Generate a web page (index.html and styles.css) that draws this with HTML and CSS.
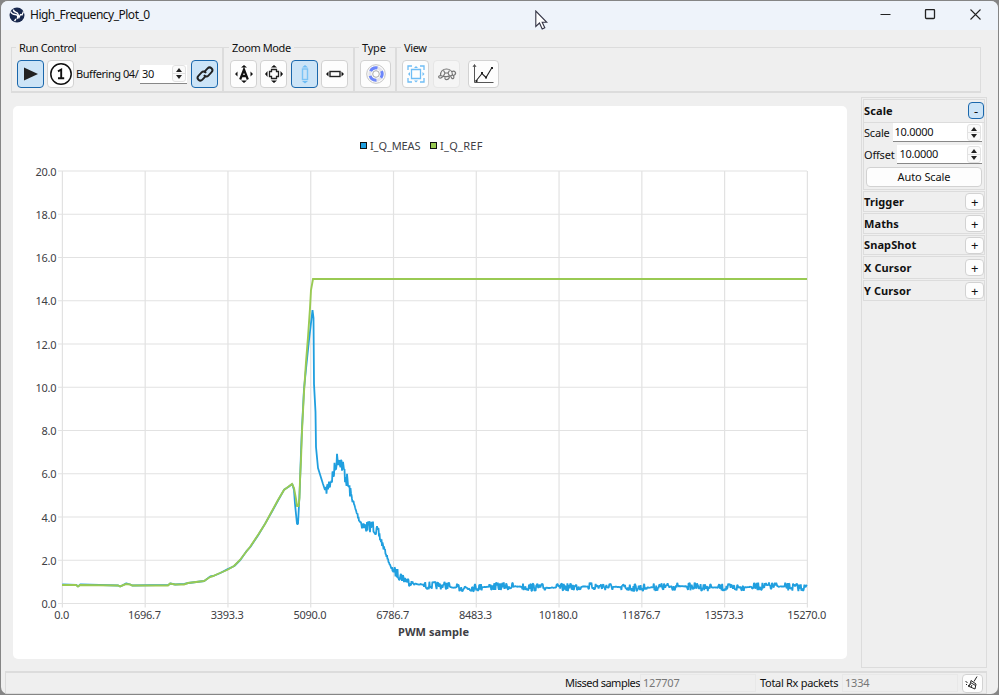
FILE: index.html
```html
<!DOCTYPE html>
<html lang="en">
<head>
    <meta charset="UTF-8">
    <title>High_Frequency_Plot_0</title>
    <link rel="stylesheet" href="styles.css">
</head>
<body>
<div class="window">
    <header class="titlebar">
        <svg class="logo" width="16" height="16" viewBox="0 0 16 16">
            <circle cx="8" cy="8" r="7.500" fill="#17274d"/>
            <path d="M1.500 4.500c1 2 2.500 3 4.500 3 2.500 0 3.500 2 2 4.500M4.500 2.500c-.500 3 4 2 4.500 4.500l1 3.500 1.500-3 1.500.500 1.500-3.500M5.500 14l1.500-2" fill="none" stroke="#fff" stroke-width="1.300"/>
        </svg>
        <span class="title">High_Frequency_Plot_0</span>
        <svg class="win-buttons" width="101" height="12" viewBox="0 0 101 12" fill="none" stroke="#222">
            <path d="M.5 5.500h10"/>
            <rect x="45.500" y=".5" width="9" height="9" rx="1" stroke-width="1.300"/>
            <path d="M90.500 .5l10 10M100.500 .5l-10 10" stroke-width="1.100"/>
        </svg>
    </header>

    <div class="toolbar">
        <section class="group run">
            <h2>Run Control</h2>
            <div class="tools">
                <button class="tool checked"><svg width="26" height="26"><path d="M6 6.500v13l14-6.500z" fill="#222"/></svg></button>
                <button class="tool one"><svg width="26" height="26"><circle cx="13" cy="13" r="10.200" fill="#fff" stroke="#111" stroke-width="1.500"/><path d="M10 10.300l3.200-1.800v9M10 17.300h6.200" fill="none" stroke="#111" stroke-width="1.900"/></svg></button>
                <span class="buffering">Buffering 04/</span>
                <div class="spin frames"><span>30</span><i class="arrows"></i></div>
                <button class="tool checked link"><svg width="26" height="26" fill="none" stroke="#222" stroke-width="1.900" stroke-linecap="round"><path d="M12.300 10.900l3.300-3.500a2.700 2.700 0 0 1 4 3.800l-3.200 3.400a2.700 2.700 0 0 1-4 0M13.700 15.100l-3.300 3.500a2.700 2.700 0 0 1-4-3.800l3.200-3.400a2.700 2.700 0 0 1 4 0"/></svg></button>
            </div>
        </section>
        <section class="group zoom">
            <h2>Zoom Mode</h2>
            <div class="tools">
                <button class="tool"><svg width="26" height="26" fill="#111"><path d="M13 4l-3 2.500h6zM13 22l-3-2.500h6zM4 13l2.500-2.500v5zM22 13l-2.500-2.500v5z"/><path d="M9.200 18.500l3.800-10 3.800 10M10.500 15.200h5" fill="none" stroke="#111" stroke-width="2.200"/></svg></button>
                <button class="tool"><svg width="26" height="26" fill="#111"><path d="M13 4l-3 2.500h6zM13 22l-3-2.500h6zM4 13l2.500-3v6zM22 13l-2.500-3v6z"/><path d="M10.500 8.500h5v2h2v5h-2v2h-5v-2h-2v-5h2z" fill="none" stroke="#222" stroke-width="1.300"/></svg></button>
                <button class="tool checked"><svg width="26" height="26" fill="#6fbdf5"><path d="M13 4l-3 2.500h6zM13 22.500l-3-2.500h6z"/><rect x="10.500" y="8" width="5" height="10.500" fill="none" stroke="#7cc3f5" stroke-width="1.400"/></svg></button>
                <button class="tool"><svg width="26" height="26" fill="#111"><path d="M4 13l2.500-2.500v5zM22 13l-2.500-2.500v5z"/><rect x="8" y="10.500" width="10" height="5" fill="none" stroke="#222" stroke-width="1.400"/></svg></button>
            </div>
        </section>
        <section class="group type">
            <h2>Type</h2>
            <div class="tools">
                <button class="tool wide"><svg width="26" height="26" fill="none"><circle cx="13" cy="13" r="9.300" stroke="#c4c4c4"/><circle cx="13" cy="13" r="3.300" stroke="#aaa"/><circle cx="13" cy="13" r="6.200" stroke="#e3e3ea" stroke-width="3"/><circle cx="13" cy="13" r="6.200" stroke="#6c86fb" stroke-width="3" stroke-dasharray="8 4.990" stroke-dashoffset="-9"/></svg></button>
            </div>
        </section>
        <section class="group view">
            <h2>View</h2>
            <div class="tools">
                <button class="tool"><svg width="26" height="26" fill="#6fbdf5"><path d="M13 5l-2 2h4zM13 21.500l-2-2h4zM5 13l2-2v4zM21.500 13l-2-2v4z"/><path d="M8.500 8.500h9v9h-9zM5 9v-4h4M17 5h4v4M21 17v4h-4M9 21h-4v-4" fill="none" stroke="#6fbdf5" stroke-width="1.300"/></svg></button>
                <button class="tool disabled"><svg width="26" height="26" fill="none" stroke="#777" stroke-width="1.200"><path d="M6.500 14.500c0-4 2.500-6.500 6-6.500s6 2.500 6 6c-3 2-9 2-12 .5zM9.500 9.500l1.500 2.500-1.500 3M15.500 9.500l-1.500 2.500 1.500 3M11 12h3M17.500 11c3-2 5.500.5 3 3l-2 .5M6.500 14.500c-3 .5-2 3 .5 2.500l2-1.500M11 16c-1 3.500 3.500 3.500 4.500 0M17 15.500c.5 3.500 4 2.500 2.500-1"/></svg></button>
                <button class="tool wide chart-btn"><svg width="26" height="26" fill="none" stroke="#555"><path d="M4.500 4v17.500h19M3 6l1.500-2.500 1.500 2.500"/><path d="M6 20l6-7.500 4 4 6-10" stroke="#222" stroke-width="1.100"/><path d="M5.500 20h2M11 12h2M15 16.500h2M21 7h2" stroke="#222" stroke-width="2"/></svg></button>
            </div>
        </section>
    </div>

    <main class="content">
        <div class="chart-card">
            <svg id="plot" width="834" height="553" viewBox="13 106 834 553"></svg>
        </div>
        <aside class="side">
            <section class="panel scale-panel">
                <div class="panel-head"><h3>Scale</h3><button class="toggle open">-</button></div>
                <div class="panel-body">
                    <div class="field"><label>Scale</label><div class="spin"><span>10.0000</span><i class="arrows"></i></div></div>
                    <div class="field"><label>Offset</label><div class="spin"><span>10.0000</span><i class="arrows"></i></div></div>
                    <button class="auto">Auto Scale</button>
                </div>
            </section>
            <section class="panel"><h3>Trigger</h3><button class="toggle">+</button></section>
            <section class="panel"><h3>Maths</h3><button class="toggle">+</button></section>
            <section class="panel short"><h3>SnapShot</h3><button class="toggle">+</button></section>
            <section class="panel tall"><h3>X Cursor</h3><button class="toggle">+</button></section>
            <section class="panel"><h3>Y Cursor</h3><button class="toggle">+</button></section>
        </aside>
    </main>

    <footer class="statusbar">
        <label class="missed">Missed samples</label><output>127707</output>
        <label class="packets">Total Rx packets</label><output>1334</output>
        <button class="clear"><svg width="18" height="16" viewBox="0 0 18 16" fill="none" stroke="#222"><path d="M14 1.500l-3 5M8 5.500l5 3.500-1 5-7-3c1.500-.5 2.500-2 3-5.500zM7.500 7.500l5 3M8 12l1-2M6 11l1.500-2M2.500 6.500l2 1M3 9.500h1"/></svg></button>
    </footer>
</div>
<svg class="cursor" width="13" height="20"><path d="M.8 1v15.500l3.700-3.500 2.700 6 2.600-1.200-2.600-5.500h4.600z" fill="#fff" stroke="#334" stroke-width="1.100"/></svg>
<script src="script.js"></script>
</body>
</html>
```
FILE: styles.css
```css
* {
    box-sizing: border-box;
}

body {
    margin: 0;
    width: 999px;
    height: 695px;
    overflow: hidden;
    background: #858585;
    font-family: "Noto Sans", sans-serif;
    font-size: 11px;
    line-height: 14px;
    letter-spacing: -0.2px;
    color: #111;
}

h2, h3 {
    margin: 0;
    font-size: 11px;
    font-weight: normal;
}

button {
    padding: 0;
    font: inherit;
    letter-spacing: inherit;
    color: inherit;
    background: #fdfdfd;
    border: 1px solid #d2d2d2;
    border-radius: 4px;
}

.window {
    display: flex;
    flex-direction: column;
    margin: 1px 1px 0;
    height: 693px;
    background: #efefef;
    border-radius: 7px;
    overflow: hidden;
}

/* Title bar */
.titlebar {
    display: flex;
    align-items: center;
    height: 29px;
    flex: none;
    padding: 0 17px 1px 8px;
    background: #eef3fa;
}

.title {
    margin-left: 5px;
    font-size: 12px;
    letter-spacing: -0.5px;
}

.win-buttons {
    margin-left: auto;
}

/* Toolbar */
.toolbar {
    display: flex;
    flex: none;
    margin: 17px 0 0 10px;
    width: 970px;
    height: 46px;
    border: 1px solid #dcdcdc;
    border-bottom-width: 2px;
}

.group {
    flex: none;
    border-right: 2px solid #dcdcdc;
    padding-left: 5px;
}

.group h2 {
    display: table;
    margin: -7px 0 0 -1px;
    padding: 0 3px;
    background: #efefef;
    letter-spacing: -0.4px;
}

.run { width: 212px; }
.zoom { width: 131px; padding-left: 6px; }
.type { width: 42px; }
.view { border: none; }

.type h2 { letter-spacing: -0.2px; }

.tools {
    display: flex;
    align-items: center;
    gap: 3.4px;
    margin-top: 5px;
}

.run .tools {
    gap: 3px;
}

.tool {
    display: flex;
    align-items: center;
    justify-content: center;
    flex: none;
    width: 27px;
    height: 28px;
}

.tool.wide {
    width: 31px;
}

.checked {
    background: #cce4f7;
    border-color: #1a67ac;
}

.disabled {
    background: #f5f5f5;
    border-color: #e6e6e6;
    margin-left: 1px;
}

.chart-btn {
    margin-left: 4px;
}

.link {
    margin-left: 1px;
}

.buffering {
    width: 61px;
    margin-left: -1px;
    letter-spacing: -0.45px;
    white-space: nowrap;
}

.spin {
    display: flex;
    align-items: center;
    justify-content: space-between;
    height: 19px;
    padding: 0 1px 0 2px;
    background: #fff;
    border-bottom: 1px solid #888;
    letter-spacing: -0.3px;
}

.frames {
    width: 47px;
}

/* Up and down arrows of the spin boxes */
.arrows {
    display: flex;
    flex-direction: column;
    align-items: center;
    justify-content: space-between;
    width: 14px;
    height: 17px;
    padding: 2px 0;
    border: 1px solid #e2e2e2;
    border-radius: 3px;
    background: linear-gradient(#fafafa 47%, #e2e2e2 47%, #e2e2e2 53%, #fafafa 53%);
}

.arrows::before, .arrows::after {
    content: "";
    border: 3px solid transparent;
}

.arrows::before {
    border-top: none;
    border-bottom: 4px solid #222;
}

.arrows::after {
    border-bottom: none;
    border-top: 4px solid #222;
}

/* Content */
.content {
    display: flex;
    align-items: flex-start;
    gap: 14px;
    flex: none;
    margin: 4px 0 0 12px;
}

.chart-card {
    margin-top: 9px;
    height: 553px;
    background: #fff;
    border-radius: 5px;
    overflow: hidden;
}

#plot {
    display: block;
}

#plot text {
    fill: #404044;
    letter-spacing: 0;
}

/* Side panels */
.side {
    display: flex;
    flex-direction: column;
    gap: 1px;
    width: 126px;
    height: 571px;
    padding: 1px;
    border: 1px solid #dcdcdc;
}

.panel {
    display: flex;
    align-items: center;
    justify-content: space-between;
    flex: none;
    height: 21px;
    border: 1px solid #dcdcdc;
}

.panel.short {
    height: 20px;
}

.panel.tall {
    height: 23px;
}

.scale-panel {
    display: block;
    height: 91px;
}

.panel h3 {
    font-weight: bold;
    letter-spacing: 0.1px;
}

.panel-head {
    display: flex;
    align-items: center;
    justify-content: space-between;
    height: 22px;
    padding-bottom: 1px;
}

.panel-body {
    display: flex;
    flex-direction: column;
    gap: 3px;
    padding-right: 2px;
    border-top: 1px solid #dcdcdc;
}

.toggle {
    width: 19px;
    height: 17px;
    font-size: 13px;
    line-height: 14px;
}

.toggle.open {
    width: 16px;
    background: #cce4f7;
    border-color: #1a67ac;
}

.field {
    display: flex;
    align-items: center;
    gap: 3px;
}

.field .spin {
    flex: 1;
}

.auto {
    height: 20px;
    margin-left: 2px;
    letter-spacing: -0.1px;
}

/* Status bar */
.statusbar {
    display: flex;
    align-items: center;
    flex: none;
    margin: 3px 0 0 4px;
    width: 982px;
    height: 23px;
    padding-left: 559px;
    border: 1px solid #dcdcdc;
    border-top-width: 2px;
}

.statusbar label {
    white-space: nowrap;
}

.missed {
    width: 75px;
    letter-spacing: -0.5px;
}

.packets {
    width: 82px;
    margin-left: 4px;
    letter-spacing: -0.3px;
}

.statusbar output {
    width: 116px;
    height: 18px;
    padding: 1px 2px;
    line-height: 14px;
    color: #777;
    border: 1px solid #e8e8e8;
}

.clear {
    display: flex;
    margin-left: 4px;
    width: 21px;
    height: 19px;
}

.cursor {
    position: absolute;
    left: 535px;
    top: 10px;
}
```
FILE: script.js
```js
const NS = 'http://www.w3.org/2000/svg';
const plot = document.getElementById('plot');

const left = 62, right = 807, top_ = 171, bottom = 603.5;

function add(tag, attrs, text) {
    const el = document.createElementNS(NS, tag);
    for (const [key, value] of Object.entries(attrs)) {
        el.setAttribute(key, value);
    }
    if (text) el.textContent = text;
    plot.appendChild(el);
}

function label(x, y, text, width, anchor, weight) {
    add('text', {
        x: x, y: y, 'text-anchor': anchor, textLength: width,
        'font-size': 11, 'font-weight': weight || 400
    }, text);
}

// Grid and axis labels
for (let i = 0; i <= 10; i++) {
    const y = bottom - i * (bottom - top_) / 10;
    const text = (i * 2).toFixed(1);
    add('path', { d: `M${left - 4} ${y}H${right}`, stroke: '#e2e2e2', 'stroke-width': 1.2 });
    label(56.5, y + 4.5, text, text.length * 6 - 3, 'end');
}

const ticks = ['0.0', '1696.7', '3393.3', '5090.0', '6786.7', '8483.3', '10180.0', '11876.7', '13573.3', '15270.0'];
ticks.forEach((text, i) => {
    const x = left + 0.4 + i * (right - left) / 9;
    add('path', { d: `M${x} ${top_}V${bottom + 4}`, stroke: '#e2e2e2', 'stroke-width': 1.2 });
    label(x - 0.7, 619, text, text.length * 6 - 3, 'middle');
});
label(433.5, 636, 'PWM sample', 71, 'middle', 700);

// Legend
add('rect', { x: 360.5, y: 142.5, width: 6, height: 6, fill: '#209fdf', stroke: '#111' });
label(370, 150, 'I_Q_MEAS', 50.5, 'start');
add('rect', { x: 430.5, y: 142.5, width: 6, height: 6, fill: '#99ca53', stroke: '#111' });
label(440, 150, 'I_Q_REF', 42.5, 'start');

// Both signals follow the same ramp until the dip
const ramp = [[62, 585], [76, 585], [78, 586.5], [80, 585], [118, 585.5], [120, 586.5], [126, 584],
    [130, 584.5], [132, 585.5], [168, 585.5], [170, 583.5], [175, 584.5], [184, 584.5], [188, 583],
    [204, 581], [210, 577], [213, 576], [220, 573], [227, 570], [234, 566], [240, 560], [246, 552],
    [250, 547], [258, 535], [265, 524], [272, 511], [278, 500], [284, 490], [288, 487], [292, 484]];

const ref = [...ramp, [294, 488], [296, 499], [297, 506], [298.5, 506], [299.5, 498], [300, 480], [301, 460],
    [302, 431], [304, 392], [306, 362], [308, 337], [310, 308], [311, 290], [313, 279], [807, 279]];

// The measured current trails the reference by a fraction of a pixel
const meas = [...ramp.map(([x, y], i) => [x + 0.3, y - (i % 3 ? 0 : 0.6)]), [294, 490], [295, 504], [297, 524],
    [298, 524], [299, 505], [300, 483], [301, 452], [302, 428], [304, 389], [306, 369], [309, 340], [311, 323],
    [312.5, 310], [313.5, 318], [314, 384], [315.5, 412], [316, 447], [318, 468], [323, 484], [325, 490]];

// Centre line of the measured signal and its ripple
const decay = [[326, 491, 4], [330, 482, 9], [334, 472, 8], [337, 459, 7], [340, 459, 8], [344, 471, 9],
    [349, 488, 8], [352, 498, 3], [356, 511, 2], [360, 521, 4], [364, 527, 6], [373, 526, 6], [379, 535, 6],
    [385, 551, 2], [391, 568, 1], [395, 572, 5], [402, 577, 5], [409, 582, 4], [415, 584, 1], [425, 585, 1]];
const bursts = [[424, 450], [457, 482], [489, 514], [522, 546], [556, 581], [588, 613], [621, 647],
    [653, 678], [687, 711], [718, 744], [752, 777], [785, 808]];

let seed = 7;
function noise() {
    seed = (seed * 16807) % 2147483647;
    return seed / 2147483647 * 2 - 1;
}

for (let x = 326; x < 424; x += 0.5) {
    const i = decay.findIndex(p => p[0] > x);
    const a = decay[i - 1], b = decay[i];
    const t = (x - a[0]) / (b[0] - a[0]);
    const amp = a[2] + (b[2] - a[2]) * t;
    meas.push([x, a[1] + (b[1] - a[1]) * t + amp * noise()]);
}
for (let x = 424; x <= 807; x += 0.6) {
    const busy = bursts.some(b => x >= b[0] && x <= b[1]);
    const base = x < 450 ? 585.5 : 587 + 0.7 * Math.sin(x / 14);
    meas.push([x, base + (busy ? 4 : 0.4) * noise()]);
}

add('polyline', { points: meas.join(' '), fill: 'none', stroke: '#209fdf', 'stroke-width': 1.8, 'stroke-linejoin': 'bevel' });
add('polyline', { points: ref.join(' '), fill: 'none', stroke: '#99ca53', 'stroke-width': 1.9 });
```
